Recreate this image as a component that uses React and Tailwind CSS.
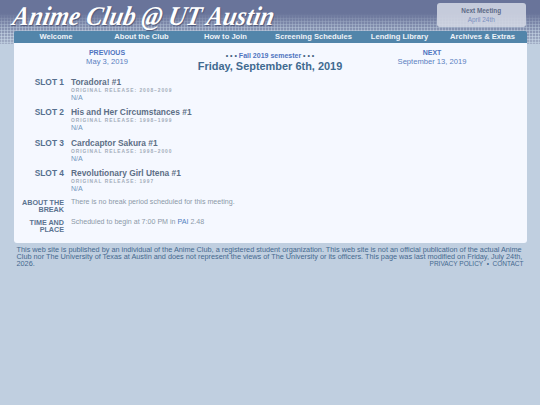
import React from "react";

const navItems = ["Welcome", "About the Club", "How to Join", "Screening Schedules", "Lending Library", "Archives & Extras"];

const slots = [
  { slot: "SLOT 1", title: "Toradora! #1", release: "2008–2009" },
  { slot: "SLOT 2", title: "His and Her Circumstances #1", release: "1998–1999" },
  { slot: "SLOT 3", title: "Cardcaptor Sakura #1", release: "1998–2000" },
  { slot: "SLOT 4", title: "Revolutionary Girl Utena #1", release: "1997" },
];

function Row({ label, children, className }) {
  return (
    <div className={`grid grid-cols-[50.5px_1fr] gap-x-[7px] ${className}`}>
      <div className="text-right font-bold text-[#5b7390] text-[7.2px] leading-[7.5px]">{label}</div>
      <div className="text-[#8c98a8] text-[7.1px] leading-[7.5px]">{children}</div>
    </div>
  );
}

export default function App() {
  return (
    <div className="relative min-h-[405px] bg-[#c0cfe0] font-['Liberation_Sans',Arial,sans-serif]">
      {/* halftone header backdrop */}
      <div className="absolute inset-x-0 top-0 h-[44px] bg-gradient-to-b from-[#69749a] from-30% to-[#a3afc6]" />
      <div className="absolute inset-x-0 top-[14px] h-[30px] bg-[radial-gradient(circle,#c0cfe0_0.9px,transparent_1.2px)] bg-[length:3px_3px] [mask-image:linear-gradient(to_bottom,transparent,black_70%)]" />

      <div className="relative mx-[13.5px]">
        <header className="flex h-[30.5px] justify-between">
          <h1 className="ml-[-1px] mt-[3px] origin-left -skew-x-12 scale-y-110 whitespace-nowrap font-['Liberation_Serif',serif] text-[24.5px] font-bold italic leading-[25px] tracking-[0.1px] text-white [text-shadow:1px_1px_1px_#4a5578]">
            Anime Club @ UT Austin
          </h1>
          <div className="mr-[0.5px] mt-[3px] flex h-[24px] w-[89.5px] flex-col items-center justify-center rounded-[3px] bg-[#d6dae6]/85 text-center text-[6.4px] leading-[9px]">
            <span className="font-bold text-[#5d6a86]">Next Meeting</span>
            <span className="text-[#7a8fc0]">April 24th</span>
          </div>
        </header>

        <nav className="grid h-[12.5px] grid-cols-[85px_86px_82px_94px_78px_1fr] items-center rounded-t-[2px] bg-[#5285aa] text-center text-[7.6px] font-bold text-[#eef3f8]">
          {navItems.map((item) => (
            <a key={item} className="whitespace-nowrap">{item}</a>
          ))}
        </nav>

        <main className="h-[200px] rounded-b-[3px] bg-[#f5f8ff] pt-[5px]">
          <div className="grid grid-cols-3 text-center">
            <div className="ml-[16px] text-[7px] leading-[9px]">
              <div className="font-bold text-[#4f74c0]">PREVIOUS</div>
              <div className="text-[7.6px] text-[#5a80c0]">May 3, 2019</div>
            </div>
            <div className="pt-[3px]">
              <div className="text-[7px] font-bold leading-[9px] text-[#4f74c0]">
                <span className="text-[#44607f]">• • •</span> Fall 2019 semester <span className="text-[#44607f]">• • •</span>
              </div>
              <div className="whitespace-nowrap text-[10.95px] font-bold leading-[13px] text-[#3f6a90]">Friday, September 6th, 2019</div>
            </div>
            <div className="mr-[18px] text-[7px] leading-[9px]">
              <div className="font-bold text-[#4f74c0]">NEXT</div>
              <div className="text-[7.6px] text-[#5a80c0]">September 13, 2019</div>
            </div>
          </div>

          <div className="mt-[3.5px]">
            {slots.map((s) => (
              <div key={s.slot} className="mb-[5.6px] grid grid-cols-[50.5px_1fr] gap-x-[7px]">
                <div className="text-right text-[8.4px] font-bold leading-[10px] text-[#55708f]">{s.slot}</div>
                <div>
                  <div className="text-[8.4px] font-bold leading-[10px] text-[#5d6f86]">{s.title}</div>
                  <div className="text-[4.9px] font-bold leading-[7px] tracking-[0.95px] text-[#a3adba]">ORIGINAL RELEASE: {s.release}</div>
                  <div className="text-[7px] leading-[8px] text-[#7397bd]">N/A</div>
                </div>
              </div>
            ))}
          </div>

          <Row label={<>ABOUT THE<br />BREAK</>} className="mt-[1px]">
            There is no break period scheduled for this meeting.
          </Row>
          <Row label={<>TIME AND<br />PLACE</>} className="mt-[5px]">
            Scheduled to begin at 7:00 PM in <span className="text-[#4f7fc0]">PAI</span> 2.48
          </Row>
        </main>

        <footer className="px-[3px] pt-[2.5px] text-[7.3px] leading-[7px] text-[#45698f]">
          <p>
            This web site is published by an individual of the Anime Club, a registered student organization. This web site is not an official publication of the actual Anime Club nor The University of Texas at Austin and does not represent the views of The University or its officers. This page was last modified on Friday, July 24th,
          </p>
          <div className="flex justify-between">
            <span>2026.</span>
            <span className="text-[6.5px]">PRIVACY POLICY &nbsp;•&nbsp; CONTACT</span>
          </div>
        </footer>
      </div>
    </div>
  );
}
